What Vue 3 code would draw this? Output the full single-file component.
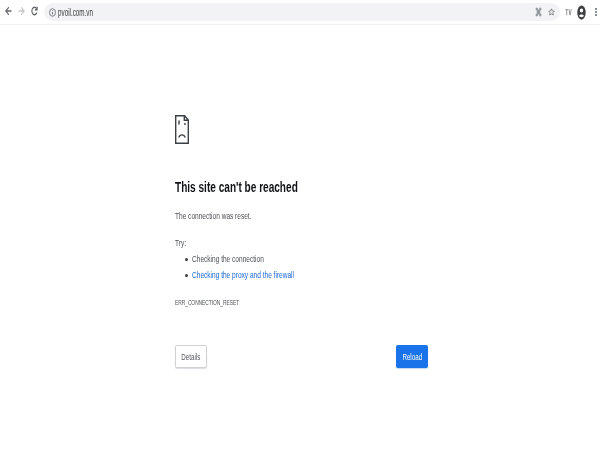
<script setup>
const tips = [
  { text: 'Checking the connection', link: false },
  { text: 'Checking the proxy and the firewall', link: true },
]
</script>

<template>
  <div class="page">
    <header class="toolbar">
      <div class="nav">
        <svg class="ic" viewBox="0 0 12 12" preserveAspectRatio="none"><path d="M11 6H1.500M6.500 1.500 1.500 6l5 4.500" fill="none" stroke="#5f6368" stroke-width="1.700"/></svg>
        <svg class="ic" viewBox="0 0 12 12" preserveAspectRatio="none"><path d="M1 6h9.500M5.500 1.500l5 4.500-5 4.500" fill="none" stroke="#c4c7ca" stroke-width="1.700"/></svg>
        <svg class="ic" viewBox="0 0 12 12" preserveAspectRatio="none"><path d="M10 8A4.500 4.500 0 1 1 9.400 3M10.500.8v3.600H6.800" fill="none" stroke="#5f6368" stroke-width="1.800"/></svg>
      </div>
      <div class="omni">
        <svg class="info" viewBox="0 0 10 10" preserveAspectRatio="none"><circle cx="5" cy="5" r="4.200" fill="none" stroke="#5f6368" stroke-width="1"/><path d="M5 4.400v2.800M5 2.600v.9" stroke="#5f6368" stroke-width="1"/></svg>
        <span class="url"><span class="squeeze sq-url">pvoil.com.vn</span></span>
        <svg class="ext" viewBox="0 0 10 12" preserveAspectRatio="none"><path d="M1 1h3v2h2V1h3v3H7.500v4H9v3H6V9H4v2H1V8h1.500V4H1z" fill="#94989c"/></svg>
        <svg class="star" viewBox="0 0 10 10" preserveAspectRatio="none"><path d="M5 1 6.200 3.700l2.900.3-2.200 1.900.7 2.900L5 7.300 2.400 8.800l.7-2.900L.9 4l2.900-.3z" fill="none" stroke="#6b6f73" stroke-width="1"/></svg>
      </div>
      <div class="tools">
        <svg class="tv" viewBox="0 0 10 10" preserveAspectRatio="none"><path d="M.5 1.500h4v1.200H3.100V9H1.900V2.700H.5zM5 1.500h1.300L7.300 7l1-5.500h1.200L8 9H6.600z" fill="#84888c"/></svg>
        <svg class="avatar" viewBox="0 0 12 16" preserveAspectRatio="none"><ellipse cx="6" cy="8" rx="5.600" ry="7.600" fill="#3c4043"/><circle cx="6" cy="5.800" r="2.200" fill="#fff"/><path d="M2.600 11.800c.7-2.400 6.100-2.400 6.800 0-1.700 1.600-5.100 1.600-6.800 0z" fill="#fff"/></svg>
        <span class="menu"><i></i><i></i><i></i></span>
      </div>
    </header>

    <main class="content">
      <svg class="sad" viewBox="0 0 14 29">
        <path d="M.7.700h8.800l3.800 4.300v23.300H.7zM9.300.700v4.500h4" fill="none" stroke="#3c4043" stroke-width="1.400"/>
        <path d="M4 5.500v4M10 8v2" stroke="#3c4043" stroke-width="1.400"/>
        <path d="M3.800 22.500c1.200-3.600 5.200-3.600 6.400 0" fill="none" stroke="#3c4043" stroke-width="1.300"/>
      </svg>
      <h1 class="title"><span class="squeeze sq-title">This site can't be reached</span></h1>
      <p class="line reset"><span class="squeeze">The connection was reset.</span></p>
      <p class="line try"><span class="squeeze">Try:</span></p>
      <ul class="tips">
        <li v-for="tip in tips" :key="tip.text" :class="{ link: tip.link }">
          <span class="squeeze">{{ tip.text }}</span>
        </li>
      </ul>
      <p class="code"><span class="squeeze">ERR_CONNECTION_RESET</span></p>
      <div class="buttons">
        <button class="btn details"><span class="squeeze">Details</span></button>
        <button class="btn reload"><span class="squeeze">Reload</span></button>
      </div>
    </main>
  </div>
</template>

<style>
html, body { margin: 0; background: #fff; }
</style>

<style scoped>
.page {
  width: 600px;
  height: 450px;
  overflow: hidden;
  background: #fff;
  font-family: "Liberation Sans", Arial, sans-serif;
  filter: blur(0.45px);
}
.squeeze {
  display: inline-block;
  transform: scaleX(0.69);
  transform-origin: left center;
  white-space: nowrap;
}
.sq-title { transform: scaleX(0.65); }
.sq-url { transform: scaleX(0.63); }
.toolbar {
  height: 25px;
  box-sizing: border-box;
  padding-top: 3px;
  display: flex;
  align-items: flex-start;
  border-bottom: 1px solid #f0f0f0;
}
.nav {
  display: flex;
  gap: 6px;
  padding: 3px 0 0 5px;
  width: 44px;
  box-sizing: border-box;
}
.ic { width: 7px; height: 10px; }
.omni {
  width: 516px;
  height: 18px;
  box-sizing: border-box;
  background: #f1f3f4;
  border-radius: 9px;
  display: flex;
  align-items: center;
  padding: 0 5px;
  gap: 2px;
}
.info { width: 7px; height: 9px; }
.url { flex: 1; font-size: 10px; color: #3c4043; }
.ext { width: 7px; height: 10px; margin-right: 4px; }
.star { width: 7px; height: 8px; }
.tools {
  display: flex;
  align-items: center;
  height: 18px;
  gap: 5px;
  padding-left: 5px;
}
.tv { width: 7px; height: 8px; }
.avatar { width: 9px; height: 15px; }
.menu { display: flex; flex-direction: column; gap: 1.500px; margin-left: 4px; }
.menu i { width: 1.500px; height: 1.500px; background: #8a8d91; display: block; }
.content {
  width: 253px;
  margin-left: 175px;
  padding-top: 90px;
}
.sad { display: block; width: 14px; height: 29px; }
.title {
  margin: 34px 0 0;
  font-size: 15.500px;
  line-height: 18px;
  font-weight: 700;
  color: #111316;
}
.line, .code { margin: 0; color: #4d5054; }
.line { font-size: 9.500px; line-height: 12px; }
.reset { margin-top: 14px; }
.try { margin-top: 15px; }
.tips {
  margin: 2px 0 0;
  padding: 0 0 0 10px;
  list-style: none;
  font-size: 9.500px;
  line-height: 16px;
  color: #4d5054;
}
.tips li { display: flex; align-items: center; gap: 4px; }
.tips li::before {
  content: "";
  width: 3px;
  height: 3px;
  border-radius: 50%;
  background: #3c4043;
}
.tips .link { color: #1a66d6; }
.code { margin-top: 15px; font-size: 7px; line-height: 10px; }
.buttons {
  display: flex;
  justify-content: space-between;
  margin-top: 37px;
}
.btn {
  width: 32px;
  height: 23px;
  padding: 0;
  font: inherit;
  font-size: 9px;
  border-radius: 2px;
  display: flex;
  align-items: center;
  justify-content: center;
}
.details { background: #fff; border: 1px solid #d0d2d4; color: #55585c; box-shadow: 0 1px 1px #dcdde0; }
.reload { background: #1a73e8; border: 0; color: #fff; box-shadow: 0 1px 1px #c6d4ec; }
.btn .squeeze { transform-origin: center; }
</style>
